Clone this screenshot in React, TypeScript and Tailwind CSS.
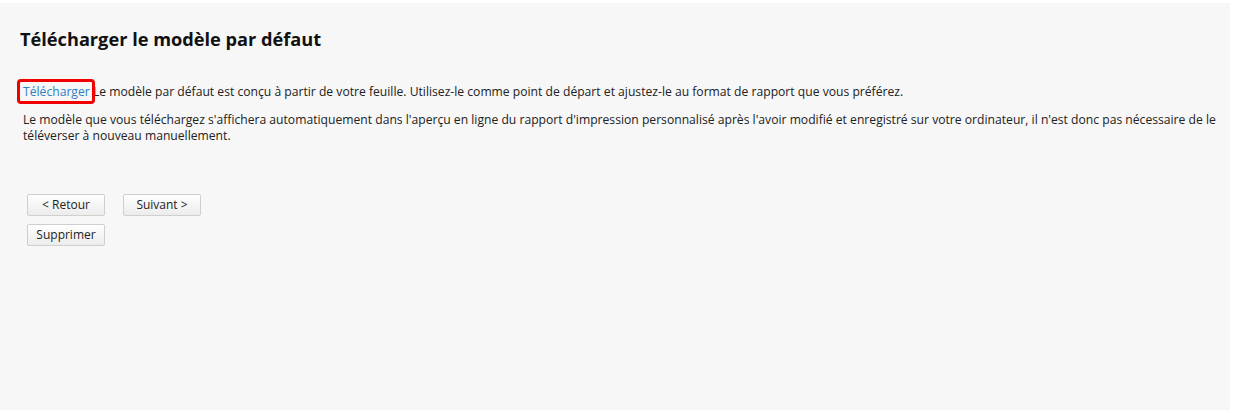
import React from "react";

const font = { fontFamily: '"Open Sans", "Liberation Sans", sans-serif' };

const Btn = ({ children }: { children: React.ReactNode }) => (
  <button className="h-[22px] w-[78px] rounded-[2px] border border-[#cfcfcf] bg-gradient-to-b from-white to-[#ececec] text-[12px] leading-none text-[#222]">
    {children}
  </button>
);

export default function App() {
  return (
    <div className="h-[413px] w-full bg-white pb-[3px] pr-[3px] pt-[3px]" style={font}>
      <div className="h-full bg-[#f7f7f7] pl-[20px] pt-[23px]">
        <h1 className="text-[18.2px] font-bold leading-[26px] text-[#111]">
          Télécharger le modèle par défaut
        </h1>
        <div className="pl-[3px] pr-[10px] pt-[32px] text-[12.15px] leading-[16px] text-[#222]">
          <p className="relative">
            <span className="relative text-[#2f80c8]">
              Télécharger
              <span className="absolute -bottom-[4px] -left-[6px] -right-[5px] -top-[4px] rounded-[4px] border-[3px] border-[#f00000]" />
            </span>{" "}
            Le modèle par défaut est conçu à partir de votre feuille. Utilisez-le comme point de départ et ajustez-le au format de rapport que vous préférez.
          </p>
          <p className="mt-[12px]">
            Le modèle que vous téléchargez s'affichera automatiquement dans l'aperçu en ligne du rapport d'impression personnalisé après l'avoir modifié et enregistré sur votre ordinateur, il n'est donc pas nécessaire de le téléverser à nouveau manuellement.
          </p>
        </div>
        <div className="flex flex-col gap-[8px] pl-[7px] pt-[50px]">
          <div className="flex gap-[18px]">
            <Btn>&lt; Retour</Btn>
            <Btn>Suivant &gt;</Btn>
          </div>
          <div className="flex">
            <Btn>Supprimer</Btn>
          </div>
        </div>
      </div>
    </div>
  );
}
